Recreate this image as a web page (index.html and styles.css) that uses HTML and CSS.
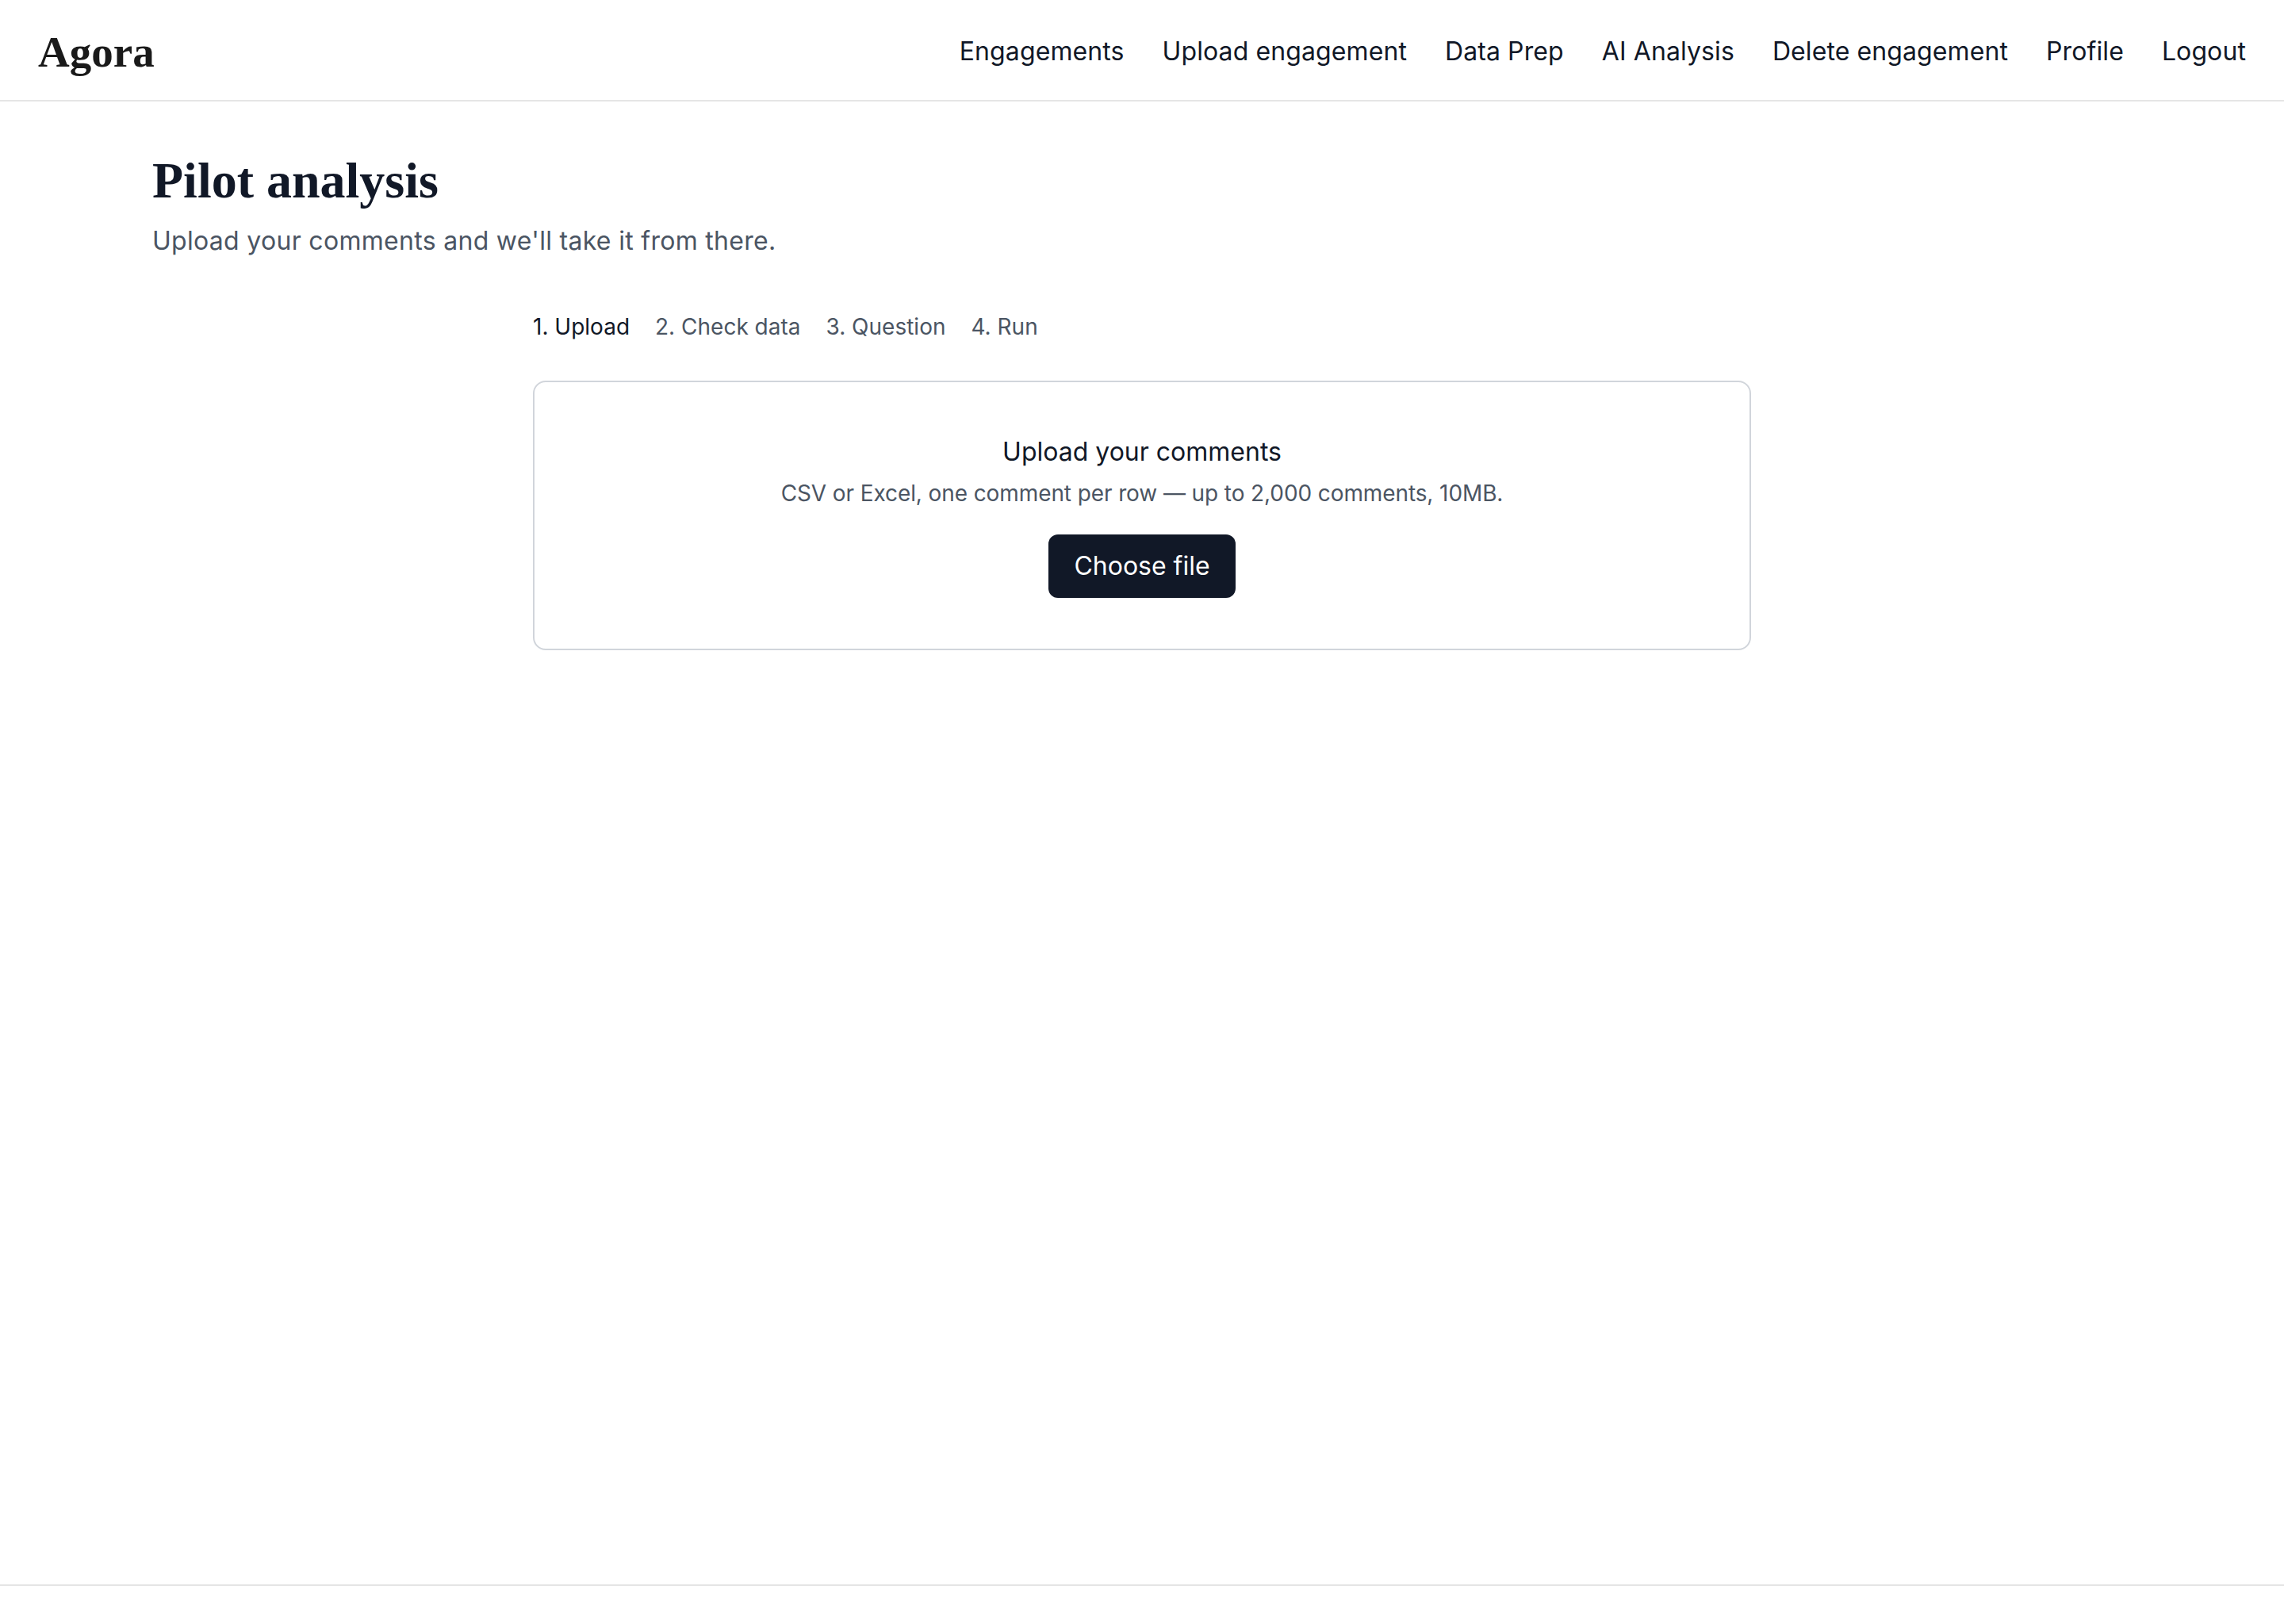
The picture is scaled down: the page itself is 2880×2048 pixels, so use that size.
FILE: index.html
```
<!DOCTYPE html>
<html lang="en">
<head>
    <meta charset="UTF-8">
    <title>Agora - Pilot analysis</title>
    <link rel="stylesheet" href="styles.css">
</head>
<body>
    <header class="topbar">
        <a href="#" class="logo">Agora</a>
        <nav class="nav">
            <a href="#">Engagements</a>
            <a href="#">Upload engagement</a>
            <a href="#">Data Prep</a>
            <a href="#">AI Analysis</a>
            <a href="#">Delete engagement</a>
            <a href="#">Profile</a>
            <a href="#">Logout</a>
        </nav>
    </header>
    <main class="page">
        <h1>Pilot analysis</h1>
        <p class="lead">Upload your comments and we'll take it from there.</p>
        <div class="wizard">
            <ol class="steps">
                <li class="active">1. Upload</li>
                <li>2. Check data</li>
                <li>3. Question</li>
                <li>4. Run</li>
            </ol>
            <div class="upload-card">
                <h2>Upload your comments</h2>
                <p class="hint">CSV or Excel, one comment per row — up to 2,000 comments, 10MB.</p>
                <button type="button" class="btn-primary">Choose file</button>
            </div>
        </div>
    </main>
    <footer class="footer"></footer>
</body>
</html>
```
FILE: styles.css
```
body {
    margin: 0;
    font-family: Inter, "Noto Sans", sans-serif;
    color: #111827;
    background: #fff;
    min-height: 100vh;
    display: flex;
    flex-direction: column;
}
a {
    color: inherit;
    text-decoration: none;
}
.topbar {
    height: 126px;
    padding: 0 48px;
    border-bottom: 2px solid #e5e5e5;
    display: flex;
    justify-content: space-between;
    align-items: center;
}
.logo {
    font-family: "Liberation Serif", serif;
    font-size: 55px;
    font-weight: bold;
    color: #1a1a1a;
    margin-top: 4px;
}
.nav {
    display: flex;
    gap: 48px;
    font-size: 32px;
    letter-spacing: 0.1px;
    margin-top: 2px;
}
.page {
    flex: 1;
    padding: 64px 192px 0;
}
h1 {
    font-family: "Liberation Serif", serif;
    font-size: 64px;
    line-height: 72px;
    font-weight: bold;
    margin: 0;
    color: #111827;
}
.lead {
    margin: 16px 0 0;
    font-size: 32px;
    line-height: 48px;
    letter-spacing: 0.3px;
    color: #4b5563;
}
.wizard {
    max-width: 1536px;
    margin: 64px auto 0;
}
.steps {
    list-style: none;
    margin: 0 0 48px;
    padding: 0;
    display: flex;
    gap: 32px;
    font-size: 28px;
    line-height: 40px;
    color: #4b5563;
}
.steps li.active {
    color: #111827;
}
.upload-card {
    border: 2px solid #d1d5db;
    border-radius: 16px;
    padding: 64px;
    text-align: center;
}
.upload-card h2 {
    margin: 0;
    font-size: 32px;
    line-height: 48px;
    font-weight: 400;
}
.hint {
    margin: 8px 0 0;
    font-size: 28px;
    line-height: 40px;
    letter-spacing: -0.1px;
    color: #4b5563;
}
.btn-primary {
    margin-top: 32px;
    padding: 16px 32px;
    border: none;
    border-radius: 12px;
    background: #111827;
    color: #fff;
    font-family: inherit;
    font-size: 32px;
    line-height: 48px;
    cursor: pointer;
}
.footer {
    height: 48px;
    border-top: 2px solid #e5e5e5;
}
```
